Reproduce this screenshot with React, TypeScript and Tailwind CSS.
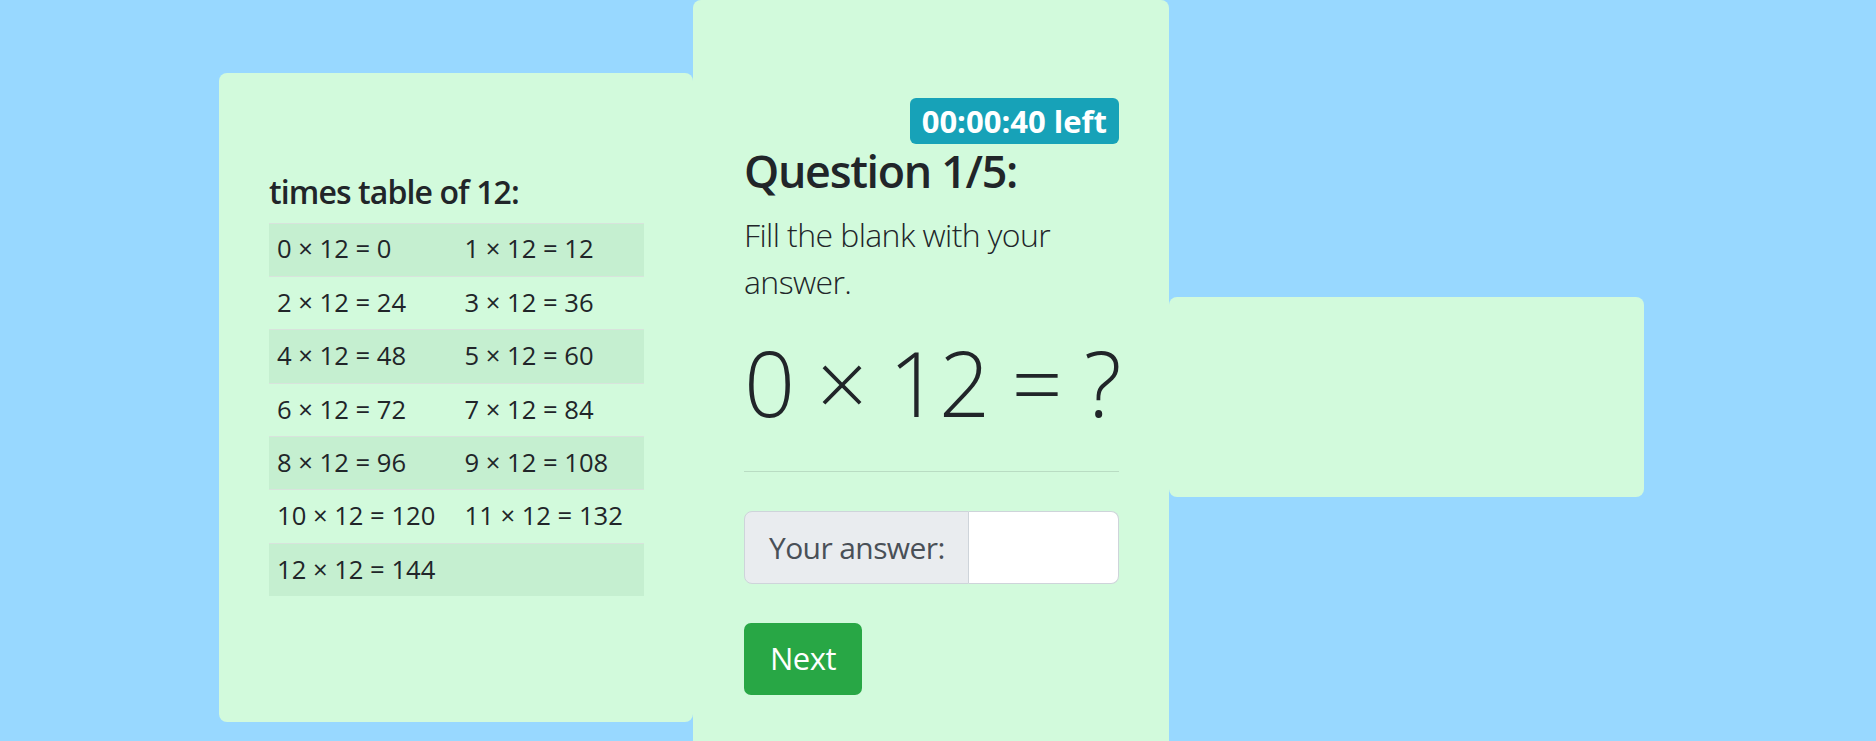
import React from "react";

const rows: [string, string][] = [
  ["0 × 12 = 0", "1 × 12 = 12"],
  ["2 × 12 = 24", "3 × 12 = 36"],
  ["4 × 12 = 48", "5 × 12 = 60"],
  ["6 × 12 = 72", "7 × 12 = 84"],
  ["8 × 12 = 96", "9 × 12 = 108"],
  ["10 × 12 = 120", "11 × 12 = 132"],
  ["12 × 12 = 144", ""],
];

export default function App() {
  return (
    <div
      className="h-screen overflow-hidden bg-[#98d8ff] text-[#212529]"
      style={{ fontFamily: '"Segoe UI", "Open Sans", "Noto Sans", sans-serif' }}
    >
      <div className="flex h-[794px] items-center pl-[219px]">
        {/* Left card */}
        <div className="h-[649px] w-[474px] rounded-[8px] bg-[#d2fadc] px-[50px] pt-[100px]">
          <h5 className="mb-[12px] text-[32px] font-semibold leading-[38px] tracking-[-0.9px]">times table of 12:</h5>
          <div className="w-[375px]">
            {rows.map((r, i) => (
              <div
                key={i}
                className={
                  "grid h-[53.35px] grid-cols-2 items-center border-t border-[#d8e3dc] text-[25.6px] leading-[38.4px] " +
                  (i % 2 === 0 ? "bg-[#c5efd0]" : "")
                }
              >
                <div className="whitespace-pre pl-[8px]">{r[0]}</div>
                <div className="whitespace-pre pl-[8px]">{r[1]}</div>
              </div>
            ))}
          </div>
        </div>

        {/* Middle card */}
        <div className="flex h-[794px] w-[476px] flex-col rounded-[8px] bg-[#d2fadc] pl-[51px] pr-[50px]">
          <div className="mt-[98px] flex justify-end">
            <span className="flex h-[46px] items-center rounded-[6px] bg-[#17a2b8] px-[12px] text-[31px] font-bold leading-none text-white">
              00:00:40 left
            </span>
          </div>
          <h3 className="text-[44.8px] font-semibold leading-[54px] tracking-[-1.3px]">Question 1/5:</h3>
          <p className="mt-[12.5px] text-[32px] font-light leading-[47px] tracking-[-0.6px]">Fill the blank with your answer.</p>
          <div className="mt-[24px] whitespace-nowrap text-[89.6px] font-light leading-[107.5px] tracking-[-1px]">0 × 12 = ?</div>
          <hr className="mt-[35px] border-0 border-t border-[#b9dcc3]" />
          <div className="mt-[38.5px] flex h-[73px]">
            <div className="flex w-[225px] items-center whitespace-nowrap rounded-l-[8px] border border-[#ced4da] bg-[#e9ecef] pl-[24px] text-[30px] tracking-[-0.6px] text-[#495057]">
              Your answer:
            </div>
            <input
              className="h-full w-[150px] rounded-r-[8px] border border-l-0 border-[#ced4da] bg-white outline-none"
              type="text"
            />
          </div>
          <div className="mt-[39px]">
            <button className="flex h-[72px] items-center rounded-[7px] bg-[#28a745] px-[26px] text-[31px] tracking-[-0.5px] text-white">
              Next
            </button>
          </div>
        </div>

        {/* Right card */}
        <div className="h-[200px] w-[475px] rounded-[8px] bg-[#d2fadc]" />
      </div>
    </div>
  );
}
